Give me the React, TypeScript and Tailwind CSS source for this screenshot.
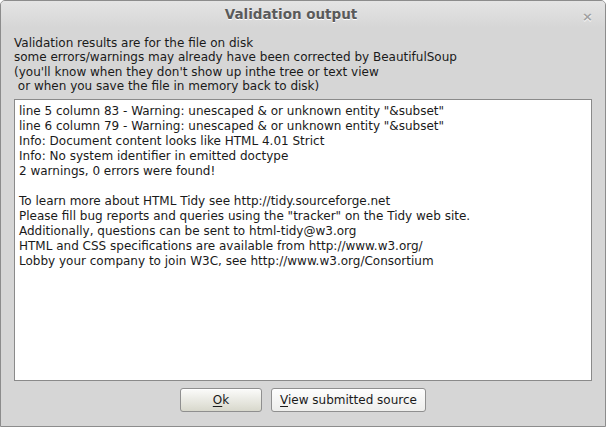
import React from "react";

const intro = [
  "Validation results are for the file on disk",
  "some errors/warnings may already have been corrected by BeautifulSoup",
  "(you'll know when they don't show up inthe tree or text view",
  " or when you save the file in memory back to disk)",
];

const output = [
  'line 5 column 83 - Warning: unescaped & or unknown entity "&subset"',
  'line 6 column 79 - Warning: unescaped & or unknown entity "&subset"',
  "Info: Document content looks like HTML 4.01 Strict",
  "Info: No system identifier in emitted doctype",
  "2 warnings, 0 errors were found!",
  "",
  "To learn more about HTML Tidy see http://tidy.sourceforge.net",
  'Please fill bug reports and queries using the "tracker" on the Tidy web site.',
  "Additionally, questions can be sent to html-tidy@w3.org",
  "HTML and CSS specifications are available from http://www.w3.org/",
  "Lobby your company to join W3C, see http://www.w3.org/Consortium",
];

export default function App() {
  return (
    <div
      className="w-[606px] h-[427px] flex flex-col bg-[#d6d6d6] border border-[#8c8c8c] rounded-t-[5px] overflow-hidden text-[#1a1a1a]"
      style={{ fontFamily: '"DejaVu Sans", Verdana, sans-serif' }}
    >
      {/* Title bar */}
      <div className="relative h-[27px] shrink-0 flex items-center justify-center pr-[24px] bg-gradient-to-b from-[#e4e4e4] to-[#d6d6d6]">
        <span className="text-[13.5px] font-bold text-[#5a5a5a] [text-shadow:0_1px_0_#ffffff]">
          Validation output
        </span>
        <span className="absolute right-[12px] top-[6px] text-[13px] font-bold text-[#a0a0a0] [text-shadow:0_1px_0_#ffffff]">
          ×
        </span>
      </div>

      {/* Intro text */}
      <div className="px-[13px] pt-[8px] text-[12px] leading-[14.3px] whitespace-pre">
        {intro.map((l, i) => (
          <div key={i}>{l}</div>
        ))}
      </div>

      {/* Output box */}
      <div className="mx-[13px] mt-[6px] h-[282px] shrink-0 bg-white border border-[#8a8a8a] px-[4px] pt-[4px] text-[12px] leading-[15px] whitespace-pre">
        {output.map((l, i) => (
          <div key={i} className="h-[15px]">{l}</div>
        ))}
      </div>

      {/* Buttons */}
      <div className="flex justify-center gap-[9px] mt-[7px]">
        <button className="w-[82px] h-[24px] rounded-[3px] border border-[#8f8f8f] bg-gradient-to-b from-[#fbfbfa] to-[#d8d8cc] text-[12px] text-[#1a1a1a] shadow-[inset_0_1px_0_#ffffff]">
          <span className="underline underline-offset-2">O</span>k
        </button>
        <button className="w-[155px] h-[24px] rounded-[3px] border border-[#8f8f8f] bg-gradient-to-b from-[#fdfdfd] to-[#eeeeec] text-[12px] text-[#1a1a1a] shadow-[inset_0_1px_0_#ffffff]">
          <span className="underline underline-offset-2">V</span>iew submitted source
        </button>
      </div>
    </div>
  );
}
